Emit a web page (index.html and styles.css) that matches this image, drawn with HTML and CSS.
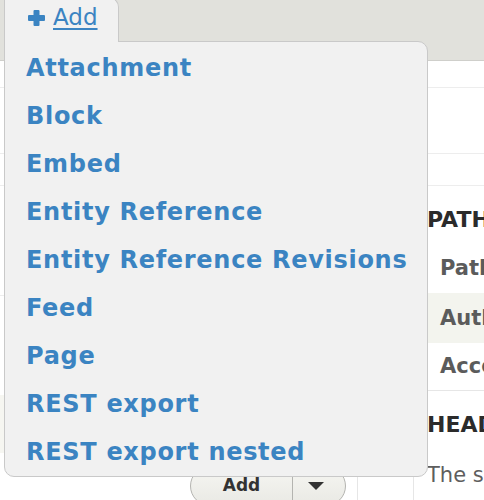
FILE: index.html
```html
<!DOCTYPE html>
<html>
<head>
<meta charset="utf-8">
<link rel="stylesheet" href="styles.css">
</head>
<body>
<div class="page">
  <div class="toolbar"></div>
  <div class="row row-a"></div>
  <div class="row row-b"></div>
  <div class="row row-c"></div>
  <div class="columns">
    <div class="left">
      <div class="left-block"></div>
      <div class="left-spacer"></div>
      <div class="left-shaded"></div>
      <div class="left-bottom">
        <div class="actions">
          <div class="dropbutton">
            <span class="db-label">Add</span>
            <span class="db-toggle"><span class="caret"></span></span>
          </div>
        </div>
      </div>
    </div>
    <div class="right">
      <h3 class="sec-title">PATH SETTINGS</h3>
      <div class="setting">Path: /admin/content</div>
      <div class="setting shaded">Authentication: cookie</div>
      <div class="setting last">Access: Permission</div>
      <h3 class="sec-title sec-2">HEADER</h3>
      <p class="desc">The style selected does not use fields.</p>
    </div>
  </div>

  <div class="add-menu">
    <div class="tab">
      <svg class="plus" width="17" height="16" viewBox="0 0 17 16"><rect x="5.5" y="0" width="6" height="16" rx="1"/><rect x="0" y="5" width="17" height="6" rx="1"/></svg>
      <a class="tab-link" href="#">Add</a>
    </div>
    <ul class="menu-list">
      <li><a href="#">Attachment</a></li>
      <li><a href="#">Block</a></li>
      <li><a href="#">Embed</a></li>
      <li><a href="#">Entity Reference</a></li>
      <li><a href="#">Entity Reference Revisions</a></li>
      <li><a href="#">Feed</a></li>
      <li><a href="#">Page</a></li>
      <li><a href="#">REST export</a></li>
      <li><a href="#">REST export nested</a></li>
    </ul>
  </div>
</div>
</body>
</html>
```

FILE: styles.css
```css
* { box-sizing: border-box; }
html, body { margin: 0; padding: 0; }
body {
  font-family: "DejaVu Sans", "Open Sans", sans-serif;
  background: #fff;
  overflow: hidden;
}
.page {
  position: relative;
  width: 484px;
  height: 500px;
  overflow: hidden;
}
.toolbar {
  height: 61px;
  background: #e1e1dc;
  border-bottom: 1px solid #cfcfcb;
}
.row { border-bottom: 1px solid #ededed; }
.row-a { height: 27px; }
.row-b { height: 66px; }
.row-c { height: 32px; }
.columns { display: flex; }
.left {
  width: 414px;
  flex: none;
  border-right: 1px solid #e6e6e6;
}
.left-block { height: 110px; border-bottom: 1px solid #ededed; }
.left-spacer { height: 99px; }
.left-shaded { height: 58px; background: #f6f6f1; }
.left-bottom { display: flex; }
.actions {
  width: 358px;
  height: 60px;
  border-right: 1px solid #e6e6e6;
  padding: 13px 0 0 190px;
}
.dropbutton {
  display: flex;
  width: 156px;
  height: 40px;
  border: 1px solid #b4b4b0;
  border-radius: 20px;
  background: linear-gradient(#f6f6f2, #e9e9e4);
  color: #333;
  font-weight: 700;
  font-size: 17px;
}
.db-label {
  width: 102px;
  text-align: center;
  line-height: 36px;
  border-right: 1px solid #b4b4b0;
}
.db-toggle { flex: 1; display: flex; justify-content: center; padding: 15px 6px 0 0; }
.caret {
  width: 0; height: 0;
  border-left: 8px solid transparent;
  border-right: 8px solid transparent;
  border-top: 8px solid #333;
}
.right {
  flex: 1;
  min-width: 0;
  padding-left: 13px;
  white-space: nowrap;
  overflow: hidden;
}
.sec-title {
  margin: 20px 0 0;
  font-size: 22px;
  line-height: 28px;
  font-weight: 700;
  color: #2b2b2b;
}
.setting {
  height: 50px;
  line-height: 50px;
  padding-left: 13px;
  font-size: 21px;
  font-weight: 700;
  color: #5b5b5b;
}
.sec-title + .setting { margin-top: 9px; }
.setting.shaded { background: #f3f4ee; }
.setting.last { height: 48px; line-height: 46px; border-bottom: 1px solid #e6e6e6; }
.sec-2 { margin-top: 20px; }
.desc {
  margin: 22px 0 0;
  font-size: 21px;
  line-height: 28px;
  color: #5e5e5e;
}

/* Add menu overlay */
.add-menu {
  position: absolute;
  left: 4px;
  top: -3px;
  display: flex;
  flex-direction: column;
  align-items: flex-start;
}
.tab {
  position: relative;
  z-index: 2;
  width: 115px;
  height: 45px;
  background: #f1f1f1;
  border: 1px solid #c9c9c9;
  border-bottom: none;
  border-radius: 0 10px 0 0;
  display: flex;
  align-items: flex-start;
  padding: 12px 0 0 23px;
  gap: 8px;
}
.plus { fill: #3b84c2; flex: none; }
.tab-link {
  color: #3b84c2;
  font-size: 23px;
  line-height: 24px;
  margin-top: -5px;
  text-decoration: underline;
  text-decoration-thickness: 2px;
  text-underline-offset: 3px;
}
.menu-list {
  list-style: none;
  margin: -1px 0 0;
  padding: 2px 0 0 21px;
  width: 424px;
  background: #f1f1f1;
  border: 1px solid #c9c9c9;
  border-radius: 0 10px 10px 10px;
}
.menu-list li {
  height: 48px;
  line-height: 48px;
}
.menu-list a {
  color: #3b84c2;
  font-size: 24px;
  font-weight: 700;
  letter-spacing: 0.7px;
  text-decoration: none;
  white-space: nowrap;
}
```
